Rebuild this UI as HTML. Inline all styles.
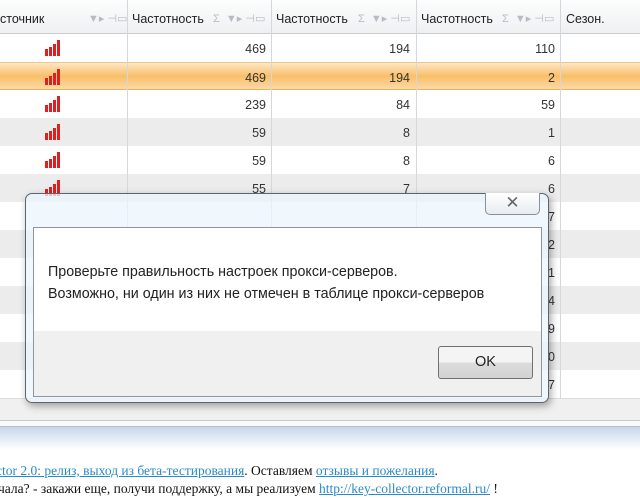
<!DOCTYPE html>
<html><head><meta charset="utf-8"><style>
*{margin:0;padding:0;box-sizing:border-box}
body{width:640px;height:490px;overflow:hidden;background:#fff;font-family:"Liberation Sans","DejaVu Sans",sans-serif;position:relative}
.hdr{position:absolute;left:0;top:0;width:640px;height:34px;background:linear-gradient(#fdfdfd,#eef0f2);border-bottom:1px solid #c9cdd2;font-size:12.5px;color:#222}
.hdr span{position:absolute;top:12px}
.vl{position:absolute;top:0;width:1px;background:#d3d8de}
.row{position:absolute;left:0;width:640px;height:28px;font-size:12.5px;color:#333}
.row span{position:absolute;top:8px;text-align:right}
.g{background:#ececec}
.o{background:linear-gradient(#fde7c4,#f9bf6a 50%,#fcd9a3);border-top:1px solid #f0c88c;border-bottom:1px solid #e6b36a}
.bars{position:absolute;left:45px;top:6px;width:18px;height:16px}
.bars i{position:absolute;bottom:0;width:3px;background:#e02020}
.ic{color:#b8bcc2;font-size:11px}
</style></head><body>
<div class="hdr">
<span style="left:0">сточник</span><span class="ic" style="left:88px">▼▸ ⊣▭</span>
<span style="left:132px">Частотность</span><span class="ic" style="left:213px">Σ &nbsp;▼▸ ⊣▭</span>
<span style="left:276px">Частотность</span><span class="ic" style="left:358px">Σ &nbsp;▼▸ ⊣▭</span>
<span style="left:421px">Частотность</span><span class="ic" style="left:502px">Σ &nbsp;▼▸ ⊣▭</span>
<span style="left:566px">Сезон.</span>
</div>
<div id="rows"></div>
<div class="vl" style="left:127px;height:398px"></div>
<div class="vl" style="left:271px;height:398px"></div>
<div class="vl" style="left:416px;height:398px"></div>
<div class="vl" style="left:560px;height:398px"></div>
<script>
var d=[[469,194,110],[469,194,2],[239,84,59],[59,8,1],[59,8,6],[55,7,6],['','',7],['','',2],['','',1],['','',4],['','',9],['','',0],['','',7]];
var h='';
for(var i=0;i<d.length;i++){var t=34+i*28;var c=i==1?'o':(i>=3&&i%2==1?'g':'');
h+='<div class="row '+c+'" style="top:'+t+'px">';
if(i<6)h+='<div class="bars"><i style="left:0;height:7px"></i><i style="left:4px;height:9px"></i><i style="left:8px;height:12px"></i><i style="left:12px;height:16px"></i></div>';
h+='<span style="right:374px">'+d[i][0]+'</span><span style="right:230px">'+d[i][1]+'</span><span style="right:85px">'+d[i][2]+'</span></div>';}
document.getElementById('rows').innerHTML=h;
</script>
<div style="position:absolute;left:0;top:398px;width:640px;height:22px;background:#f0f0f0;border-top:1px solid #ddd"></div>
<div style="position:absolute;left:0;top:420px;width:640px;height:7px;background:#fafafa;border-top:1px solid #c8c8c8;border-bottom:1px solid #b9bec6"></div>
<div style="position:absolute;left:0;top:427px;width:640px;height:22px;background:linear-gradient(#c7d6ea,#fdfeff)"></div>
<div style="position:absolute;left:0;top:462px;font-family:'Liberation Serif',serif;font-size:13.5px;line-height:18px;color:#111;white-space:nowrap">
<div style="margin-left:-4px"><u style="color:#2a8ac8">ctor 2.0: релиз, выход из бета-тестирования</u>. Оставляем <u style="color:#2a8ac8">отзывы и пожелания</u>.</div>
<div style="margin-left:-2px">чала? - закажи еще, получи поддержку, а мы реализуем <u style="color:#2a8ac8">http://key-collector.reformal.ru/</u> !</div>
</div>
<div style="position:absolute;left:25px;top:193px;width:524px;height:210px;border:1px solid #5c6470;border-radius:7px;background:rgba(235,246,252,0.75);box-shadow:2px 3px 8px rgba(0,0,0,0.35)"></div>
<div style="position:absolute;left:485px;top:193px;width:55px;height:22px;border:1px solid #8a9098;border-top:none;border-radius:0 0 5px 5px;background:linear-gradient(#fff,#e8ecf0);text-align:center;font-size:17px;line-height:20px;color:#666">✕</div>
<div style="position:absolute;left:33px;top:227px;width:509px;height:170px;border:1px solid #8f959c;background:#f0f0f0">
<div style="height:103px;background:#fff;padding:33px 0 0 14px;font-size:14.3px;line-height:22px;color:#222;white-space:nowrap">Проверьте правильность настроек прокси-серверов.<br>Возможно, ни один из них не отмечен в таблице прокси-серверов</div>
<div style="position:absolute;left:404px;top:118px;width:95px;height:33px;border:1px solid #707070;border-radius:3px;background:linear-gradient(#f4f4f4 50%,#dcdcdc 50%,#d2d2d2);text-align:center;line-height:31px;font-size:14.5px;color:#222">OK</div>
</div>
</body></html>
